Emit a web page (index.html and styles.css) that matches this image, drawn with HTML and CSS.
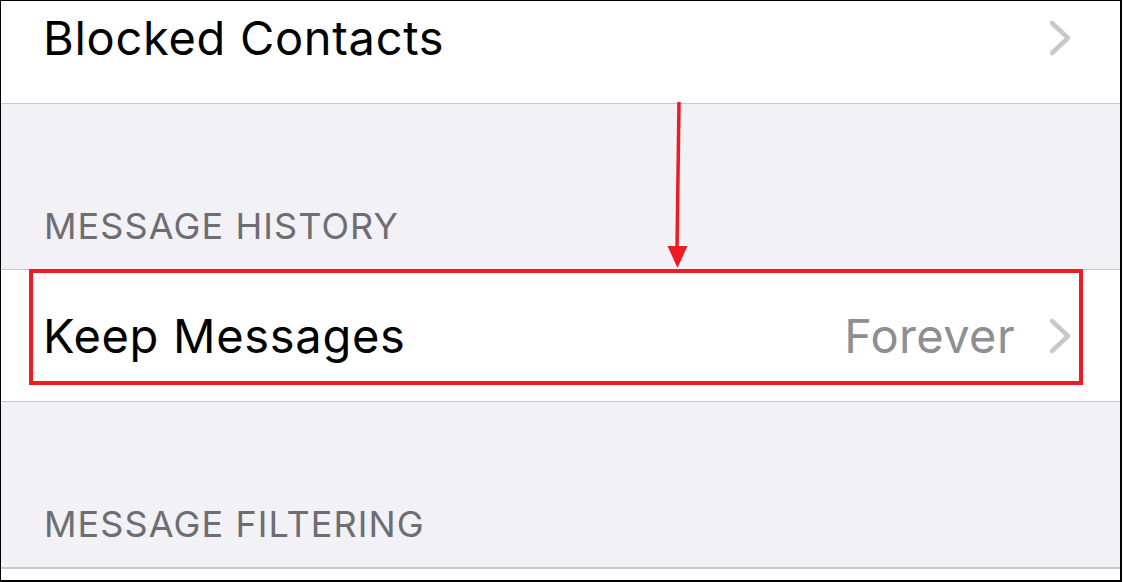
FILE: index.html
```html
<!DOCTYPE html>
<html lang="en">
<head>
<meta charset="utf-8">
<title>Messages Settings</title>
<link rel="stylesheet" href="styles.css">
</head>
<body>
<div class="frame">
  <div class="cell cell-first">
    <span class="label">Blocked Contacts</span>
    <svg class="chev" viewBox="0 0 24 38" width="24" height="38"><polyline points="4,4 20,19 4,34"/></svg>
  </div>
  <div class="header"><span>MESSAGE HISTORY</span></div>
  <div class="cell">
    <span class="label">Keep Messages</span>
    <span class="value">Forever</span>
    <svg class="chev" viewBox="0 0 24 38" width="24" height="38"><polyline points="4,4 20,19 4,34"/></svg>
  </div>
  <div class="header"><span>MESSAGE FILTERING</span></div>
  <div class="cell cell-last"></div>

  <div class="highlight"></div>
  <svg class="arrow" viewBox="0 0 1119 579" width="1119" height="579">
    <line x1="678" y1="101" x2="676" y2="249"/>
    <polygon points="666.5,245 686.5,245 676.5,267"/>
  </svg>
</div>
</body>
</html>
```
FILE: styles.css
```css
html, body {
  margin: 0;
  padding: 0;
  background: #ffffff;
}

.frame {
  position: relative;
  box-sizing: border-box;
  width: 1122px;
  height: 582px;
  border-style: solid;
  border-color: #000;
  border-width: 1px 2px 2px 1px;
  overflow: hidden;
  background: #f1f1f6;
  font-family: Inter, "Noto Sans", "Liberation Sans", sans-serif;
}

.cell {
  display: flex;
  align-items: center;
  height: 131px;
  background: #fff;
  border-bottom: 1px solid #c8c7cc;
  padding: 0 48px 0 42px;
}

.cell-first {
  margin-top: -29px;
}

.cell-last {
  border-bottom: none;
  border-top: 1px solid #c8c7cc;
  height: 40px;
}

.label {
  flex: 1;
  font-size: 47px;
  color: #000;
  letter-spacing: 0.7px;
}

.value {
  font-size: 47px;
  color: #8e8e93;
  letter-spacing: 0.4px;
  margin-right: 33px;
}

.chev {
  display: block;
  flex: none;
}

.chev polyline {
  fill: none;
  stroke: #c7c7cc;
  stroke-width: 4.5;
  stroke-linecap: round;
  stroke-linejoin: round;
}

.header {
  box-sizing: border-box;
  height: 166px;
  padding: 100px 0 0 43px;
  border-bottom: 1px solid #c8c7cc;
  font-size: 36px;
  line-height: 44px;
  letter-spacing: 1.1px;
  color: #6d6d72;
}

.highlight {
  position: absolute;
  left: 28px;
  top: 268px;
  width: 1054px;
  height: 116px;
  box-sizing: border-box;
  border: 4px solid #ed1c24;
}

.arrow {
  position: absolute;
  left: 0;
  top: 0;
}

.arrow line {
  stroke: #ed1c24;
  stroke-width: 3.5;
}

.arrow polygon {
  fill: #ed1c24;
}
```
